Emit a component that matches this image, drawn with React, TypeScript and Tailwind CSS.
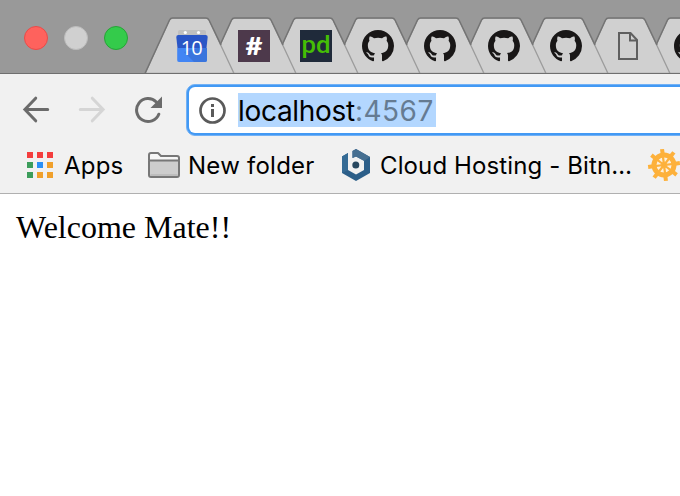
import type { ReactNode } from 'react';

function CalendarIcon() {
  return (
    <svg width="32" height="32" viewBox="0 0 32 32">
      <path d="M2 2q0-2 2-2h24q2 0 2 2v6H2z" fill="#bfbfbf" />
      <circle cx="9.3" cy="2.5" r="1.6" fill="#fff" />
      <circle cx="22.5" cy="2.5" r="1.6" fill="#fff" />
      <path d="M0.300 7q0-2 2-2h27.400q2 0 2 2L30.500 18H1.500z" fill="#2a56c6" />
      <path d="M1.200 18h29.800v12q0 2-2 2H3q-2 0-1.800-2z" fill="#4285f4" />
      <path d="M8 22 18 32h11q2 0 2-2V18H22z" fill="#3a75dd" />
      <text x="15.200" y="25" textAnchor="middle" fontFamily="Open Sans, sans-serif" fontSize="20" letterSpacing="-1" fill="#fff">10</text>
    </svg>
  );
}

function HashIcon() {
  return (
    <svg width="32" height="32" viewBox="0 0 32 32">
      <rect width="32" height="32" fill="#4d394b" />
      <text x="16" y="24.500" textAnchor="middle" textLength="17" lengthAdjust="spacingAndGlyphs" fontFamily="Lato, sans-serif" fontWeight="900" fontSize="24" fill="#fff">#</text>
    </svg>
  );
}

function PdIcon() {
  return (
    <svg width="32" height="32" viewBox="0 0 32 32">
      <rect width="32" height="32" fill="#1f2a3a" />
      <text x="16" y="22.500" textAnchor="middle" textLength="29" lengthAdjust="spacingAndGlyphs" fontFamily="Roboto, sans-serif" fontWeight="500" fontSize="23" fill="#45be05">pd</text>
    </svg>
  );
}

function GithubIcon() {
  return (
    <svg width="32" height="32" viewBox="0 0 16 16" fill="#191717">
      <path d="M8 0C3.58 0 0 3.58 0 8c0 3.54 2.29 6.53 5.47 7.59.4.07.55-.17.55-.38 0-.19-.01-.82-.01-1.49-2.01.37-2.53-.49-2.69-.94-.09-.23-.48-.94-.82-1.13-.28-.15-.68-.52-.01-.53.63-.01 1.08.58 1.23.82.72 1.21 1.87.87 2.33.66.07-.52.28-.87.51-1.07-1.78-.2-3.64-.89-3.64-3.95 0-.87.31-1.59.82-2.15-.08-.2-.36-1.02.08-2.12 0 0 .67-.21 2.2.82.64-.18 1.32-.27 2-.27.68 0 1.36.09 2 .27 1.53-1.04 2.2-.82 2.2-.82.44 1.1.16 1.92.08 2.12.51.56.82 1.27.82 2.15 0 3.07-1.87 3.75-3.65 3.95.29.25.54.73.54 1.48 0 1.07-.01 1.93-.01 2.2 0 .21.15.46.55.38A8.013 8.013 0 0016 8c0-4.42-3.58-8-8-8z" />
    </svg>
  );
}

function PageIcon() {
  return (
    <svg width="32" height="32" viewBox="0 0 32 32" fill="none" stroke="#5f5f5f" strokeWidth="2">
      <path d="M7 3h11.500l6.500 7v19H7z" />
      <path d="M18 3v7.500h7" />
    </svg>
  );
}

function Tab({ layer, wide, children }: { layer: string; wide?: boolean; children: ReactNode }) {
  return (
    <div className={`relative h-14 shrink-0 -mr-[30px] ${wide ? 'w-[94px]' : 'w-[92px]'} ${layer}`}>
      <svg className="absolute inset-0 h-full w-full" viewBox={wide ? '0 0 94 56' : '0 0 92 56'}>
        <g transform={wide ? 'translate(2 0)' : undefined}>
          <path d={wide ? 'M-1 56.5 23.5 3Q24.5 1 26.5 1H62Q64 1 65 3L90 56.5Z' : 'M1 56.5 25.500 3Q26.500 1 28.500 1H62Q64 1 65 3L90 56.5Z'} fill="#d0d0d0" stroke="#9c9c9c" strokeWidth="1.3" />
          <path d={wide ? 'M10.5 31 23.5 3Q24.5 1 26.5 1H62Q64 1 65 3L77 28' : 'M1 56.5 25.500 3Q26.500 1 28.500 1H62Q64 1 65 3L77 28'} fill="none" stroke="#747474" strokeWidth="1.5" />
        </g>
      </svg>
      <div className="relative ml-8 mt-[13px] size-8">{children}</div>
    </div>
  );
}

function Arrow({ forward }: { forward?: boolean }) {
  return (
    <svg width="28" height="28" viewBox="0 0 28 28" className={forward ? '-scale-x-100 text-[#d5d5d5]' : 'text-[#6b6b6b]'} fill="none" stroke="currentColor" strokeWidth="3">
      <path d="M25.700 13.500H3M13.700 2.200 2.900 13.500l10.800 11.300" strokeLinecap="round" />
    </svg>
  );
}

function Reload() {
  return (
    <svg width="28" height="28" viewBox="0 0 28 28">
      <path d="M24.800 18.200A11.500 11.500 0 1 1 22.300 6" fill="none" stroke="#6b6b6b" strokeWidth="3" strokeLinecap="round" />
      <path d="M28 0.500v11.500H16.500z" fill="#6b6b6b" />
    </svg>
  );
}

const appColors = ['bg-[#f43e3e]', 'bg-[#f43e3e]', 'bg-[#f43e3e]', 'bg-[#3c9d5b]', 'bg-[#2a8ff5]', 'bg-[#f0a02b]', 'bg-[#3c9d5b]', 'bg-[#f0a02b]', 'bg-[#f0a02b]'];

function Folder() {
  return (
    <svg className="shrink-0" width="32" height="26" viewBox="0 0 32 26" stroke="#777" strokeWidth="2" strokeLinejoin="round">
      <path d="M1 8V3q0-2 2-2h7l3 3h16q2 0 2 2v2" fill="#f6f6f6" />
      <path d="M1 8.500h30V23q0 2-2 2H3q-2 0-2-2z" fill="#cdcdcd" />
      <path d="M2.500 23h27" stroke="#bdbdbd" />
    </svg>
  );
}

function HexLogo() {
  return (
    <svg className="shrink-0" width="28" height="32" viewBox="0 0 28 32">
      <path d="M0 7.500 6 4v17l8 4.500 8-4.500v-9.500l-8-4L10.500 9V2L14 0l14 8v16l-14 8L0 24z" fill="#2c5f89" />
      <path d="M14 0l14 8-6 4-8-4.500L10.500 9V2z" fill="#466f91" />
      <path d="M0 7.500 6 4v17l-6 3z" fill="#356b95" />
      <circle cx="13.800" cy="16" r="3.500" fill="#27475f" />
    </svg>
  );
}

function Helm() {
  return (
    <svg width="34" height="34" viewBox="-17 -17 34 34" fill="none" stroke="#fdb13b">
      <circle r="12" fill="#fdf0dc" stroke="none" />
      <circle r="10" strokeWidth="5" />
      <circle r="3" fill="#fdc36a" stroke="#fdc36a" />
      {[0, 45, 90, 135, 180, 225, 270, 315].map((angle) => (
        <g key={angle} transform={`rotate(${angle - 7})`}>
          <path d="M0 0v-12" strokeWidth="2.200" />
          <path d="M0-11v-5" strokeWidth="4" />
        </g>
      ))}
    </svg>
  );
}

export default function App() {
  return (
    <div className="flex h-[496px] w-[680px] flex-col overflow-hidden bg-white font-['Inter','Liberation_Sans',sans-serif] text-black">
      <header className="flex h-[74px] shrink-0 overflow-hidden border-b border-[#6f6f6f] bg-[#999]">
        <div className="flex w-36 shrink-0 gap-4 pl-6 pt-[26px]">
          <span className="size-6 rounded-full border border-[#e94b49] bg-[#fe625d]" />
          <span className="size-6 rounded-full border border-[#bcbcbc] bg-[#d0d0d0]" />
          <span className="size-6 rounded-full border border-[#27a337] bg-[#34cb4b]" />
        </div>
        <nav className="isolate mt-[17px] flex">
          <Tab layer="z-[9]"><CalendarIcon /></Tab>
          <Tab layer="z-[8]"><HashIcon /></Tab>
          <Tab layer="z-[7]"><PdIcon /></Tab>
          <Tab layer="z-[6]"><GithubIcon /></Tab>
          <Tab layer="z-[5]" wide><GithubIcon /></Tab>
          <Tab layer="z-[4]"><GithubIcon /></Tab>
          <Tab layer="z-[3]"><GithubIcon /></Tab>
          <Tab layer="z-[2]"><PageIcon /></Tab>
          <Tab layer="z-[1]"><GithubIcon /></Tab>
        </nav>
      </header>

      <div className="flex h-[62px] shrink-0 bg-[#f1f1f1]">
        <div className="flex w-[186px] shrink-0 gap-7 pl-[22px] pt-[22px]">
          <Arrow />
          <Arrow forward />
          <Reload />
        </div>
        <div className="mt-2.5 flex h-[52px] w-[520px] shrink-0 rounded-[9px] border border-[#72b1f5] bg-[#4299f4] p-0.5">
          <div className="flex h-full w-full items-center rounded-md bg-white pl-[9px]">
            <svg width="28" height="28" viewBox="0 0 28 28">
              <circle cx="14.500" cy="14.500" r="12" fill="none" stroke="#5a5a5a" strokeWidth="2.700" />
              <path d="M13 8h3v3h-3zM13 13h3v8h-3z" fill="#5a5a5a" />
            </svg>
            <div className="ml-3 flex h-[34px] w-[198px] items-center whitespace-nowrap bg-[#b3d7ff] pt-0.5 text-[28px] leading-8 tracking-[-0.3px]">
              <span>localhost</span>
              <span className="tracking-[0.5px] text-[#657b92]">:4567</span>
            </div>
          </div>
        </div>
      </div>

      <div className="flex h-[58px] shrink-0 items-center overflow-hidden whitespace-nowrap border-b border-[#b0b0b0] bg-[#f1f1f1] text-2xl">
        <div className="ml-[27px] grid shrink-0 grid-cols-[repeat(3,6px)] gap-1">
          {appColors.map((color, i) => <span key={i} className={`size-1.5 ${color}`} />)}
        </div>
        <span className="ml-[11px] w-[84px] shrink-0 pt-0.5 tracking-[0.2px]">Apps</span>
        <Folder />
        <span className="ml-2 w-[154px] shrink-0 pt-0.5 tracking-[0.25px]">New folder</span>
        <HexLogo />
        <span className="ml-2.5 w-[253px] shrink-0 pt-0.5 tracking-[0.12px]">Cloud Hosting - Bitn…</span>
        <span className="ml-[14px] shrink-0"><Helm /></span>
      </div>

      <main className="px-4 pt-[15px] font-['Liberation_Serif','Times_New_Roman',serif] text-[32px] leading-9">Welcome Mate!!</main>
    </div>
  );
}
